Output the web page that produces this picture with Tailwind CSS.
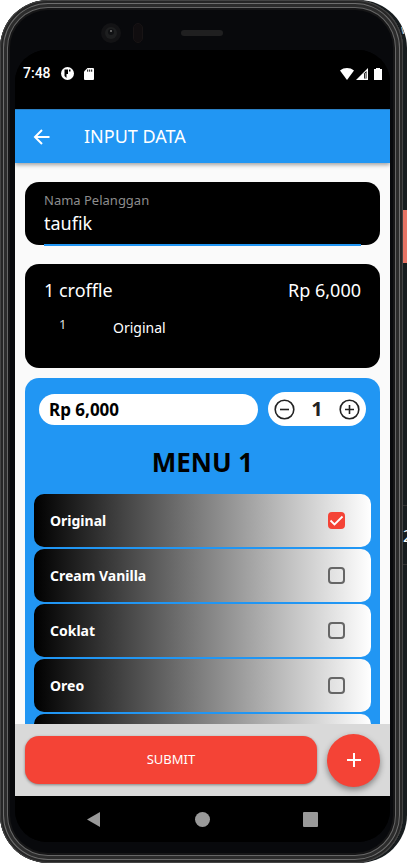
<!DOCTYPE html>
<html lang="id">
<head>
<meta charset="utf-8">
<meta name="viewport" content="width=device-width, initial-scale=1">
<title>Input Data</title>
<script src="https://cdn.jsdelivr.net/npm/@tailwindcss/browser@4"></script>
</head>
<body class="bg-white font-['Noto_Sans',sans-serif]">
<div class="relative h-screen overflow-hidden rounded-[48px] bg-[#171c1e] pr-1">
  <!-- phone body -->
  <div class="flex h-full flex-col rounded-[48px] bg-[#08090c] pr-[13px] pl-[15px] shadow-[inset_0_0_0_1px_#444,inset_0_0_0_3px_#262626,inset_0_0_0_4px_#6e6e6e,inset_0_0_0_7px_#2c2c2c,inset_0_0_0_8px_#666,inset_0_0_0_10px_#161617]">
    <div class="flex h-[50px] shrink-0 items-center pt-4 pl-[86px]" aria-hidden="true">
      <svg class="h-5 w-5" viewBox="0 0 20 20"><circle cx="10" cy="10" r="10" fill="#131315"/><circle cx="10" cy="10" r="6" fill="#1e1f20"/><circle cx="10" cy="9" r="3" fill="#101113"/><circle cx="10" cy="8" r="1" fill="#777"/></svg>
      <span class="ml-3 h-5 w-2.5 rounded-full border border-[#181415] bg-[#100d0f]"></span>
      <span class="ml-[38px] h-1.5 w-[42px] rounded-full bg-[#1f1f20]"></span>
    </div>

    <div class="flex min-h-0 flex-1 flex-col overflow-hidden rounded-[32px] bg-black">
      <header class="flex h-[59px] shrink-0 items-center bg-black px-2 pb-3 text-white">
        <span class="font-['Roboto',sans-serif] text-[14px] font-medium">7:48</span>
        <svg class="ml-2.5 h-[13px] w-[13px]" viewBox="0 0 13 13"><circle cx="6.5" cy="6.5" r="6.5" fill="#fff"/><path d="M3.500 2.500h3.500v4.500H5.500V11L3.500 9zM8 2.500h1.500v2H8z" fill="#000"/></svg>
        <svg class="ml-2.5 h-3 w-2.5" viewBox="0 0 10 12"><path d="M3.5 0H9a1 1 0 0 1 1 1v10a1 1 0 0 1-1 1H1a1 1 0 0 1-1-1V3.5z" fill="#fff"/><path d="M3.7 1.5v2.2M5.7 1.5v2.2M7.7 1.5v2.2" stroke="#000" stroke-width="1"/></svg>
        <svg class="ml-auto h-3 w-3.5" viewBox="0 0 14 12"><path d="M0 2.5C4-.8 10-.8 14 2.5L7 12z" fill="#fff"/></svg>
        <svg class="ml-0.5 h-3 w-3" viewBox="0 0 12 12"><path d="M12 0v12H0z" fill="#fff"/><path d="M8 5.500 10.500 3v7.500H8z" fill="#000"/><path d="M9.300 5v5.500" stroke="#fff" stroke-width=".8"/></svg>
        <svg class="ml-1.5 h-3 w-2" viewBox="0 0 8 12"><path d="M2 0h4v1h2v11H0V1h2z" fill="#fff"/></svg>
      </header>

      <div class="relative z-10 flex h-[54px] shrink-0 items-center border-t border-[#2b7fc2] bg-[#2196f3] pl-[18px] text-white shadow-[0_2px_4px_rgba(0,0,0,0.35)]">
        <button type="button" aria-label="Kembali" class="h-[18px] w-[18px]">
          <svg class="h-full w-full" viewBox="0 0 18 18" fill="none" stroke="#fff" stroke-width="2"><path d="M16.500 9H2.500M9 2 2 9l7 7"/></svg>
        </button>
        <h1 class="ml-[33px] text-[18px]">INPUT DATA</h1>
      </div>

      <main class="flex min-h-0 flex-1 flex-col overflow-hidden bg-[#fafafa] px-2.5 pt-[19px]">
        <div class="h-[63px] shrink-0 rounded-[14px] bg-black px-[19px] pt-2">
          <label for="nama" class="block text-[13px] leading-5 text-[#8d8d8d]">Nama Pelanggan</label>
          <input id="nama" type="text" value="taufik" class="block h-9 w-full border-b-2 border-[#2196f3] bg-transparent pb-2 text-[18px] text-white outline-none">
        </div>

        <section class="mt-[19px] h-[104px] shrink-0 rounded-[14px] bg-black px-[19px] pt-3.5 text-white">
          <div class="flex justify-between text-[18px] leading-6"><span>1 croffle</span><span>Rp 6,000</span></div>
          <div class="flex pt-3 pl-[15px]"><span class="w-[54px] text-[13px] leading-5 text-[#ddd]">1</span><span class="pt-1 text-[14px] leading-5">Original</span></div>
        </section>

        <section class="mt-2.5 shrink-0 rounded-t-[14px] bg-[#2196f3] px-[9px] pt-3.5">
          <div class="flex items-center gap-2.5 px-[5px]">
            <div class="h-[31px] flex-1 rounded-full bg-white px-2.5 text-[17px] leading-[31px] font-bold">Rp 6,000</div>
            <div class="flex h-[34px] w-[98px] items-center justify-between rounded-full bg-white px-1.5 text-[#222]">
              <button type="button" aria-label="Kurangi" class="h-[21px] w-[21px]"><svg class="h-full w-full" viewBox="0 0 21 21" fill="none" stroke="#222" stroke-width="1.6"><circle cx="10.500" cy="10.500" r="9.300"/><path d="M6 10.500h9"/></svg></button>
              <output class="text-[20px] leading-8 font-bold">1</output>
              <button type="button" aria-label="Tambah" class="h-[21px] w-[21px]"><svg class="h-full w-full" viewBox="0 0 21 21" fill="none" stroke="#222" stroke-width="1.6"><circle cx="10.500" cy="10.500" r="9.300"/><path d="M6 10.500h9M10.500 6v9"/></svg></button>
            </div>
          </div>
          <h2 class="pt-[18px] pb-3.5 text-center text-[26px] leading-9 font-bold">MENU 1</h2>
          <div class="flex flex-col gap-0.5 text-[14px] font-bold text-white">
            <label class="flex h-[53px] items-center justify-between rounded-[10px] bg-linear-to-r/srgb from-black to-white pr-[26px] pl-4">Original
              <span class="grid h-[17px] w-[17px]"><input type="checkbox" checked class="peer col-start-1 row-start-1 appearance-none rounded-[4px] border-2 border-[#666] checked:border-[#f44336] checked:bg-[#f44336]"><svg class="pointer-events-none col-start-1 row-start-1 hidden peer-checked:block" viewBox="0 0 17 17" fill="none" stroke="#fff" stroke-width="1.800"><path d="m2.500 8.500 4 4 8-8"/></svg></span>
            </label>
            <label class="flex h-[53px] items-center justify-between rounded-[10px] bg-linear-to-r/srgb from-black to-white pr-[26px] pl-4">Cream Vanilla
              <input type="checkbox" class="h-[17px] w-[17px] appearance-none rounded-[4px] border-2 border-[#666] checked:bg-[#f44336]">
            </label>
            <label class="flex h-[53px] items-center justify-between rounded-[10px] bg-linear-to-r/srgb from-black to-white pr-[26px] pl-4">Coklat
              <input type="checkbox" class="h-[17px] w-[17px] appearance-none rounded-[4px] border-2 border-[#666] checked:bg-[#f44336]">
            </label>
            <label class="flex h-[53px] items-center justify-between rounded-[10px] bg-linear-to-r/srgb from-black to-white pr-[26px] pl-4">Oreo
              <input type="checkbox" class="h-[17px] w-[17px] appearance-none rounded-[4px] border-2 border-[#666] checked:bg-[#f44336]">
            </label>
            <div class="h-[53px] rounded-[10px] bg-linear-to-r/srgb from-black to-white"></div>
          </div>
        </section>
      </main>

      <div class="z-10 flex h-[72px] shrink-0 items-center gap-2.5 bg-[#d9d9d9] px-2.5">
        <button type="button" class="h-12 flex-1 rounded-[14px] bg-[#f44336] text-[13px] text-white shadow-[0_1px_3px_rgba(0,0,0,0.4)]">SUBMIT</button>
        <button type="button" aria-label="Tambah menu" class="flex h-[53px] w-[53px] items-center justify-center rounded-full bg-[#f44336] shadow-[0_3px_6px_rgba(0,0,0,0.4)]"><svg class="h-3.5 w-3.5" viewBox="0 0 14 14" stroke="#fff" stroke-width="2"><path d="M0 7h14M7 0v14"/></svg></button>
      </div>

      <nav class="flex h-[46px] shrink-0 items-center justify-between bg-black px-[72px]">
        <button type="button" aria-label="Back" class="h-[15px] w-[15px]"><svg class="h-full w-full" viewBox="0 0 15 15"><path d="M0 7.500 13 0v15z" fill="#999"/></svg></button>
        <button type="button" aria-label="Home" class="h-[15px] w-[15px] rounded-full bg-[#999]"></button>
        <button type="button" aria-label="Recent" class="h-[15px] w-[15px] rounded-[1px] bg-[#999]"></button>
      </nav>
    </div>
    <div class="h-[21px] shrink-0"></div>
  </div>
  <!-- side keys and window text peeking past the right edge -->
  <div class="absolute top-[210px] right-0 h-[53px] w-1 bg-[#e67364]"></div>
  <div class="absolute top-[505px] right-0 h-[60px] w-1 overflow-hidden border-y border-[#333] bg-[#171c1e] text-[16px] leading-[60px] text-white">2</div>
  <div class="absolute top-[22px] right-0 h-4 w-1.5 overflow-hidden text-[12px] leading-4 text-[#ccc]">w</div>
</div>
</body>
</html>
